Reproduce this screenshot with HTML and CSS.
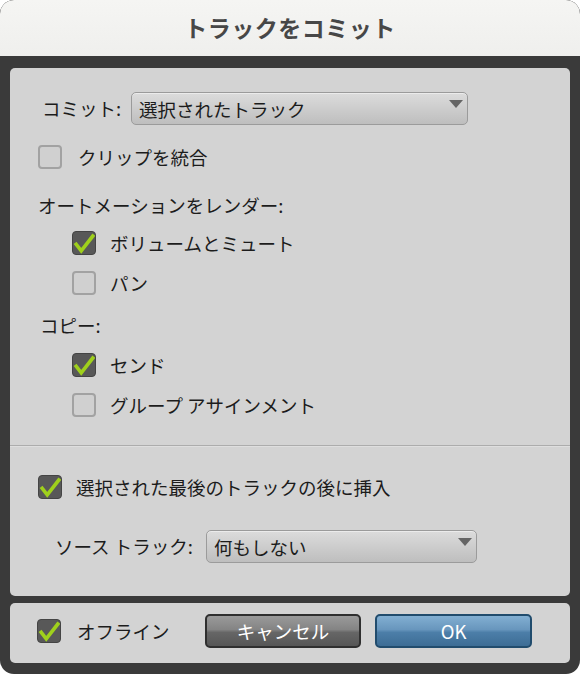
FILE: index.html
```html
<!DOCTYPE html>
<html lang="ja">
<head>
  <meta charset="UTF-8">
  <meta name="viewport" content="width=device-width, initial-scale=1.0">
  <title>トラックをコミット</title>
  <link rel="stylesheet" href="styles.css">
</head>
<body class="ctd-body">

<div class="ctd-dialog">
  <div class="ctd-titlebar">トラックをコミット</div>

  <div class="ctd-frame">
    <div class="ctd-panel ctd-panel-main">

      <div class="ctd-row ctd-row-commit">
        <span class="ctd-label ctd-label-commit">コミット:</span>
        <div class="ctd-select ctd-select-commit">選択されたトラック<span class="ctd-arrow"></span></div>
      </div>

      <div class="ctd-row ctd-row-clip">
        <span class="ctd-check"></span>
        <span class="ctd-text">クリップを統合</span>
      </div>

      <div class="ctd-heading ctd-heading-auto">オートメーションをレンダー:</div>

      <div class="ctd-row ctd-row-sub">
        <span class="ctd-check ctd-checked">
          <svg viewBox="0 0 24 24"><path d="M3.5 13.5 L9 20.5 L21.5 4.5"/></svg>
        </span>
        <span class="ctd-text">ボリュームとミュート</span>
      </div>

      <div class="ctd-row ctd-row-sub">
        <span class="ctd-check"></span>
        <span class="ctd-text">パン</span>
      </div>

      <div class="ctd-heading ctd-heading-copy">コピー:</div>

      <div class="ctd-row ctd-row-sub ctd-row-send">
        <span class="ctd-check ctd-checked">
          <svg viewBox="0 0 24 24"><path d="M3.5 13.5 L9 20.5 L21.5 4.5"/></svg>
        </span>
        <span class="ctd-text">センド</span>
      </div>

      <div class="ctd-row ctd-row-sub">
        <span class="ctd-check"></span>
        <span class="ctd-text">グループ アサインメント</span>
      </div>

      <div class="ctd-divider"></div>

      <div class="ctd-row ctd-row-insert">
        <span class="ctd-check ctd-checked">
          <svg viewBox="0 0 24 24"><path d="M3.5 13.5 L9 20.5 L21.5 4.5"/></svg>
        </span>
        <span class="ctd-text">選択された最後のトラックの後に挿入</span>
      </div>

      <div class="ctd-row ctd-row-source">
        <span class="ctd-label ctd-label-source">ソース トラック:</span>
        <div class="ctd-select ctd-select-source">何もしない<span class="ctd-arrow"></span></div>
      </div>

    </div>

    <div class="ctd-panel ctd-panel-footer">
      <div class="ctd-row ctd-row-offline">
        <span class="ctd-check ctd-checked">
          <svg viewBox="0 0 24 24"><path d="M3.5 13.5 L9 20.5 L21.5 4.5"/></svg>
        </span>
        <span class="ctd-text">オフライン</span>
      </div>
      <button class="ctd-button ctd-button-cancel">キャンセル</button>
      <button class="ctd-button ctd-button-ok">OK</button>
    </div>
  </div>
</div>

</body>
</html>
```

FILE: styles.css
```css
/* base */
.ctd-body {
  margin: 0;
  padding: 0;
  background: #fff;
  font-family: "Noto Sans CJK JP", "Noto Sans", sans-serif;
  color: #1c1c1c;
}

.ctd-dialog {
  width: 580px;
  height: 674px;
  border-radius: 14px;
  overflow: hidden;
  display: flex;
  flex-direction: column;
  background-color: #3a3a3a;
}

/* title */
.ctd-titlebar {
  height: 56px;
  line-height: 54px;
  text-align: center;
  background: linear-gradient(#f5f5f3, #efefed);
  border-radius: 14px 14px 0 0;
  font-size: 23px;
  font-weight: bold;
  color: #474747;
  letter-spacing: 0.5px;
}

/* frame */
.ctd-frame {
  flex: 1;
  display: flex;
  flex-direction: column;
  gap: 7px;
  padding: 12px 10px 11px 10px;
}

.ctd-panel {
  background-color: #d3d3d3;
  border-radius: 5px;
}

.ctd-panel-main {
  height: 528px;
  padding-top: 20px;
  box-sizing: border-box;
}

.ctd-panel-footer {
  flex: 1;
  display: flex;
  align-items: center;
  padding-left: 27px;
}

/* rows */
.ctd-row {
  height: 40px;
  display: flex;
  align-items: center;
  padding-left: 28px;
  font-size: 18.5px;
}

.ctd-row-clip {
  margin-top: 9px;
}

.ctd-row-clip .ctd-check {
  margin-right: 16px;
}

.ctd-row-sub {
  padding-left: 62px;
}

.ctd-row-send {
  margin-top: 2px;
}

.ctd-row-insert {
  margin-top: 20px;
}

.ctd-row-source {
  margin-top: 19px;
  padding-left: 45px;
}

.ctd-row-commit {
  padding-left: 32px;
}

.ctd-heading {
  height: 36px;
  line-height: 36px;
  padding-left: 28px;
  font-size: 18.5px;
}

.ctd-heading-auto {
  margin-top: 10px;
}

.ctd-heading-copy {
  margin-top: 4px;
  padding-left: 30px;
}

.ctd-label-commit {
  width: 89px;
}

.ctd-label-source {
  width: 151px;
}

.ctd-divider {
  margin-top: 20px;
  height: 1px;
  background-color: #acacac;
  border-bottom: 1px solid #dedede;
}

/* select */
.ctd-select {
  position: relative;
  height: 33px;
  line-height: 32px;
  box-sizing: border-box;
  padding-left: 7px;
  border: 1px solid #9b9b9b;
  border-radius: 5px;
  background: linear-gradient(#dcdcdc, #bebebe);
  box-shadow: inset 0 1px 0 rgba(255, 255, 255, .45);
}

.ctd-select-commit {
  width: 337px;
}

.ctd-select-source {
  width: 271px;
}

.ctd-arrow {
  position: absolute;
  top: 7px;
  right: 4px;
  width: 0;
  height: 0;
  border-left: 7px solid transparent;
  border-right: 7px solid transparent;
  border-top: 8px solid #656565;
}

/* checkbox */
.ctd-check {
  width: 24px;
  height: 24px;
  box-sizing: border-box;
  flex-shrink: 0;
  margin-right: 14px;
  border: 2px solid #a2a2a2;
  border-radius: 4px;
  background-color: #d0d0d0;
}

.ctd-checked {
  border: 1px solid #444;
  background-color: #585858;
}

.ctd-checked svg {
  display: block;
  width: 22px;
  height: 22px;
}

.ctd-checked path {
  fill: none;
  stroke: #9fd01c;
  stroke-width: 4;
  stroke-linecap: square;
  stroke-linejoin: miter;
}

/* footer */
.ctd-row-offline {
  padding-left: 0;
  width: 168px;
  margin-top: -4px;
}

.ctd-row-offline .ctd-check {
  margin-right: 16px;
}

.ctd-button {
  height: 34px;
  margin-top: -4px;
  border-radius: 5px;
  font-family: "Noto Sans CJK JP", "Noto Sans", sans-serif;
  font-size: 18.5px;
  color: #fff;
  padding: 0;
}

.ctd-button-cancel {
  width: 156px;
  margin-right: 14px;
  border: 2px solid #2f2f2f;
  background: linear-gradient(#9a9a9a 0%, #848484 45%, #666 55%, #565656 100%);
}

.ctd-button-ok {
  width: 157px;
  border: 2px solid #214c6d;
  background: linear-gradient(#82afd2 0%, #6896bd 45%, #4c7ea8 55%, #3d6d95 100%);
}
```
